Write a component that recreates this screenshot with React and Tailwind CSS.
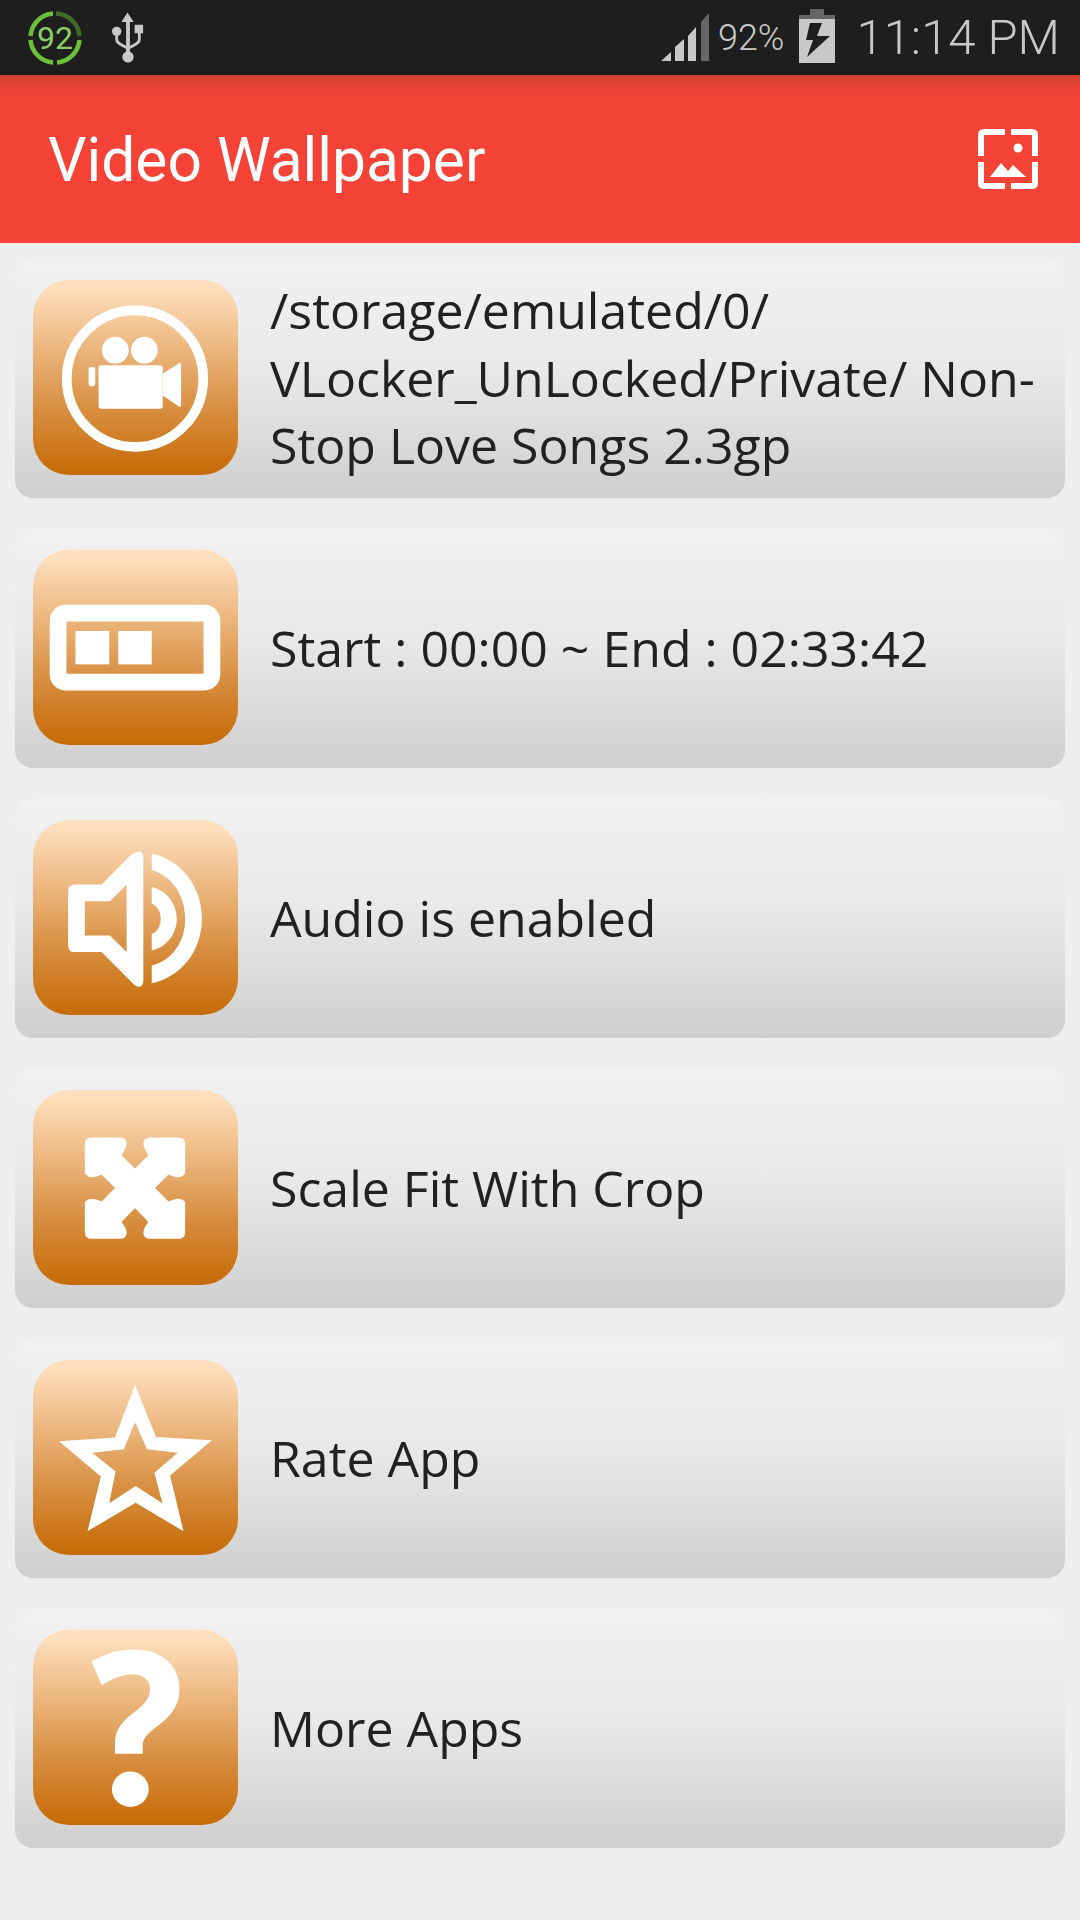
const font = { fontFamily: 'Roboto, sans-serif' };

// all icon drawings share one viewBox, 3x the size of the orange tile
const CameraIcon = () => (
    <>
        <circle cx="305" cy="295" r="204" fill="none" stroke="#fff" strokeWidth="29" />
        <circle cx="246" cy="210" r="40" fill="#fff" />
        <circle cx="333" cy="210" r="40" fill="#fff" />
        <rect x="196" y="255" width="192" height="130" rx="8" fill="#fff" />
        <rect x="166" y="260" width="20" height="58" rx="8" fill="#fff" />
        <path d="M388 280 L436 249 Q443 245 443 253 L443 374 Q443 382 436 378 L388 345 Z" fill="#fff" />
    </>
);

const SliderIcon = () => (
    <>
        <rect x="75" y="189" width="460" height="206" rx="22" fill="none" stroke="#fff" strokeWidth="50" />
        <rect x="127" y="242" width="101" height="100" fill="#fff" />
        <rect x="255" y="242" width="100" height="100" fill="#fff" />
    </>
);

const SpeakerIcon = () => (
    <>
        <path
            fillRule="evenodd"
            fill="#fff"
            d="M125 193 H205 L295 102 Q330 82 330 112 V478 Q330 508 305 495 L205 395 H125 Q105 395 105 375 V213 Q105 193 125 193 Z M155 243 V345 H230 L280 395 V193 L230 243 Z"
        />
        <path fill="#fff" d="M355 100 C440 118 505 195 505 295 C505 395 440 470 355 488 V435 C415 420 455 365 455 295 C455 225 415 165 355 150 Z" />
        <path fill="#fff" d="M355 200 C400 210 430 250 430 295 C430 340 400 380 355 390 V340 C372 335 382 315 382 295 C382 275 372 258 355 250 Z" />
    </>
);

const ArrowsIcon = () => (
    <path
        fill="#fff"
        d="M175 142 H260 Q280 142 280 160 Q280 170 265 195 L305 235 L345 195 Q330 172 330 160 Q330 142 350 142 H435 Q455 142 455 162 V250 Q440 270 405 253 L365 293 L405 333 Q440 316 455 335 V425 Q455 445 435 445 H350 Q330 445 330 425 Q330 415 345 395 L305 353 L265 395 Q280 415 280 425 Q280 445 260 445 H175 Q155 445 155 425 V335 Q170 316 205 333 L245 293 L205 253 Q170 270 155 250 V162 Q155 142 175 142 Z"
    />
);

const StarIcon = () => (
    <path
        fillRule="evenodd"
        fill="#fff"
        d="M305 75 L368 230 L535 240 L410 345 L450 512 L307 427 L163 512 L203 348 L78 243 L245 232 Z M305 185 L272 267 L177 277 L247 333 L228 428 L307 377 L387 428 L363 337 L433 277 L341 267 Z"
    />
);

const QuestionIcon = () => (
    <>
        <path
            fill="#fff"
            d="M175 93 C215 72 255 58 300 58 C385 58 438 105 438 175 C438 225 415 255 375 285 C340 312 328 325 328 345 V370 H245 V340 C245 300 265 275 295 252 C330 225 350 205 350 177 C350 150 330 132 300 132 C270 132 240 143 205 165 Z"
        />
        <ellipse cx="291" cy="476" rx="55" ry="53" fill="#fff" />
    </>
);

const items = [
    { icon: <CameraIcon />, text: ['/storage/emulated/0/', 'VLocker_UnLocked/Private/ Non-', 'Stop Love Songs 2.3gp'] },
    { icon: <SliderIcon />, text: ['Start : 00:00 ~ End : 02:33:42'] },
    { icon: <SpeakerIcon />, text: ['Audio is enabled'] },
    { icon: <ArrowsIcon />, text: ['Scale Fit With Crop'] },
    { icon: <StarIcon />, text: ['Rate App'] },
    { icon: <QuestionIcon />, text: ['More Apps'] },
];

const BatteryRing = () => (
    <div className="relative w-[54px] h-[54px]">
        <svg width="54" height="54" viewBox="0 0 54 54" className="absolute inset-0">
            <g fill="none" strokeWidth="4.5">
                <path d="M28 2.5 A24.5 24.5 0 0 1 51.5 25" stroke="#3f6b2a" />
                <path d="M51.5 29 A24.5 24.5 0 0 1 29 51.5" stroke="#6cbf3a" />
                <path d="M25 51.5 A24.5 24.5 0 0 1 2.5 29" stroke="#6cbf3a" />
                <path d="M2.5 25 A24.5 24.5 0 0 1 25 2.5" stroke="#6cbf3a" />
            </g>
        </svg>
        <span style={font} className="absolute inset-0 flex items-center justify-center text-[32px] leading-none text-[#8ccb6a]">
            92
        </span>
    </div>
);

const UsbIcon = () => (
    <svg width="34" height="52" viewBox="0 0 36 54" className="block">
        <path d="M17.5 0 L24 10 H20 V42 H16 V10 H11 Z" fill="#c8c8c8" />
        <circle cx="18" cy="47" r="6" fill="#c8c8c8" />
        <circle cx="6" cy="20" r="5" fill="#c8c8c8" />
        <rect x="25" y="13" width="9" height="9" fill="#c8c8c8" />
        <path d="M6 22 V28 Q6 31 9 33 L18 38 L27 33 Q30 31 30 28 V21" fill="none" stroke="#c8c8c8" strokeWidth="3" />
    </svg>
);

const SignalIcon = () => (
    <svg width="48" height="48" viewBox="0 0 48 48" className="block">
        <path d="M0 48 L10 39 V48 Z" fill="#c8c8c8" />
        <path d="M14 48 V34 L23 26 V48 Z" fill="#c8c8c8" />
        <path d="M27 48 V23 L35 14 V48 Z" fill="#c8c8c8" />
        <path d="M40 48 V9 L48 0 V48 Z" fill="#666" />
    </svg>
);

const BatteryIcon = () => (
    <svg width="36" height="54" viewBox="0 0 36 54" className="block">
        <rect x="11" y="0" width="14" height="6" fill="#666" />
        <rect x="0" y="6" width="36" height="4" fill="#666" />
        <rect x="0" y="10" width="36" height="44" fill="#c8c8c8" />
        <path d="M11 14 H23 L18 27 H31 L8 48 L14 31 H7 Z" fill="#1e1e1e" />
    </svg>
);

const WallpaperIcon = () => (
    <svg width="60" height="60" viewBox="0 0 60 60" className="block">
        <path d="M27 3 H6 Q3 3 3 6 V27 M33 3 H54 Q57 3 57 6 V27 M3 33 V54 Q3 57 6 57 H27 M57 33 V54 Q57 57 54 57 H33" fill="none" stroke="#fff" strokeWidth="6" />
        <circle cx="40" cy="19" r="4.5" fill="#fff" />
        <path d="M12 48 L23 34 L30 42 L35 36 L48 48 Z" fill="#fff" />
    </svg>
);

export default function App() {
    return (
        <div className="w-[1080px] h-[1920px] bg-[#eeeeee] overflow-hidden">
            {/* status bar */}
            <div className="h-[75px] bg-[#1e1e1e] flex items-center justify-between pl-[28px] pr-[20px]">
                <div className="flex items-center gap-[29px]">
                    <BatteryRing />
                    <UsbIcon />
                </div>
                <div style={font} className="flex items-center text-[#c8c8c8] font-light">
                    <div className="mb-[2px]"><SignalIcon /></div>
                    <span className="ml-[9px] text-[36px] leading-none">92%</span>
                    <div className="ml-[15px] mb-[4px]"><BatteryIcon /></div>
                    <span className="ml-[21px] text-[49px] leading-none">11:14 PM</span>
                </div>
            </div>

            {/* app bar */}
            <div className="h-[168px] bg-[linear-gradient(to_bottom,#d24032_0px,#ea4235_14px,#f44336_30px,#f54437_100%)] flex items-center justify-between pl-[48px] pr-[42px]">
                <span style={font} className="text-[60.5px] leading-none text-white mt-[4px]">Video Wallpaper</span>
                <WallpaperIcon />
            </div>

            {/* list */}
            <div className="flex flex-col gap-[30px] px-[15px] pt-[15px]">
                {items.map((item, i) => (
                    <div
                        key={i}
                        className="h-[240px] rounded-[18px] bg-[linear-gradient(to_bottom,#f1f1f1_0%,#e9e9e9_45%,#cfcfcf_100%)] flex items-center pl-[18px] gap-[32px]"
                    >
                        <div className="w-[205px] h-[195px] mb-[1px] shrink-0 rounded-[36px] bg-[linear-gradient(to_bottom,#fddfbd_4%,#efbd88_30%,#d88f42_65%,#c66a05_100%)]">
                            <svg width="205" height="195" viewBox="0 0 613 583" className="block">{item.icon}</svg>
                        </div>
                        <div className="text-[50px] leading-[67.5px] mt-[1px] text-[#212121] font-['Open_Sans',sans-serif]">
                            {item.text.map((line, j) => (
                                <div key={j} className="whitespace-nowrap">{line}</div>
                            ))}
                        </div>
                    </div>
                ))}
            </div>
        </div>
    );
}
